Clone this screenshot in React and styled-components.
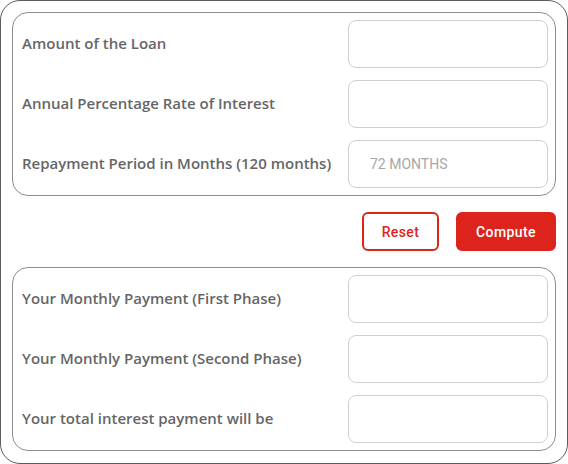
import React from "react";
import styled, { createGlobalStyle } from "styled-components";

const Global = createGlobalStyle`
  html, body { margin: 0; padding: 0; background: #fff; }
  * { box-sizing: border-box; }
`;

const Card = styled.div`
  width: 568px;
  height: 464px;
  border: 1.5px solid #5c5c5c;
  border-radius: 20px;
  padding: 11px;
  display: flex;
  flex-direction: column;
  background: #fff;
`;

const Panel = styled.div`
  border: 1px solid #8e8e8e;
  border-radius: 16px;
  padding: 7px 7px 7px 9px;
  display: grid;
  grid-template-columns: 1fr 200px;
  grid-auto-rows: 48px;
  row-gap: 12px;
  align-items: center;
`;

const Label = styled.div`
  font-family: "Open Sans", "Noto Sans", sans-serif;
  font-weight: 600;
  font-size: 15px;
  color: #666;
  margin-top: -2px;
`;

const Field = styled.input`
  width: 200px;
  height: 48px;
  border: 1px solid #cfcfcf;
  border-radius: 8px;
  padding: 0 21px;
  font-family: "Roboto", sans-serif;
  font-size: 14px;
  color: #333;
  outline: none;
  &::placeholder { color: #a8a8a8; }
`;

const Actions = styled.div`
  display: flex;
  justify-content: flex-end;
  gap: 17px;
  padding: 16px 0;
`;

const Button = styled.button`
  height: 39px;
  width: ${(p) => (p.$primary ? "100px" : "77px")};
  border-radius: 6px;
  border: 2px solid #dc241c;
  background: ${(p) => (p.$primary ? "#dc241c" : "#fff")};
  color: ${(p) => (p.$primary ? "#fff" : "#dc241c")};
  font-family: "Roboto", sans-serif;
  font-weight: 500;
  font-size: 14px;
  letter-spacing: 0.4px;
  cursor: pointer;
`;

const topRows = [
  { label: "Amount of the Loan", placeholder: "" },
  { label: "Annual Percentage Rate of Interest", placeholder: "" },
  { label: "Repayment Period in Months (120 months)", placeholder: "72 MONTHS" },
];

const bottomRows = [
  "Your Monthly Payment (First Phase)",
  "Your Monthly Payment (Second Phase)",
  "Your total interest payment will be",
];

export default function App() {
  return (
    <>
      <Global />
      <Card>
        <Panel>
          {topRows.map((r) => (
            <React.Fragment key={r.label}>
              <Label>{r.label}</Label>
              <Field placeholder={r.placeholder} />
            </React.Fragment>
          ))}
        </Panel>
        <Actions>
          <Button>Reset</Button>
          <Button $primary>Compute</Button>
        </Actions>
        <Panel>
          {bottomRows.map((l) => (
            <React.Fragment key={l}>
              <Label>{l}</Label>
              <Field readOnly />
            </React.Fragment>
          ))}
        </Panel>
      </Card>
    </>
  );
}
